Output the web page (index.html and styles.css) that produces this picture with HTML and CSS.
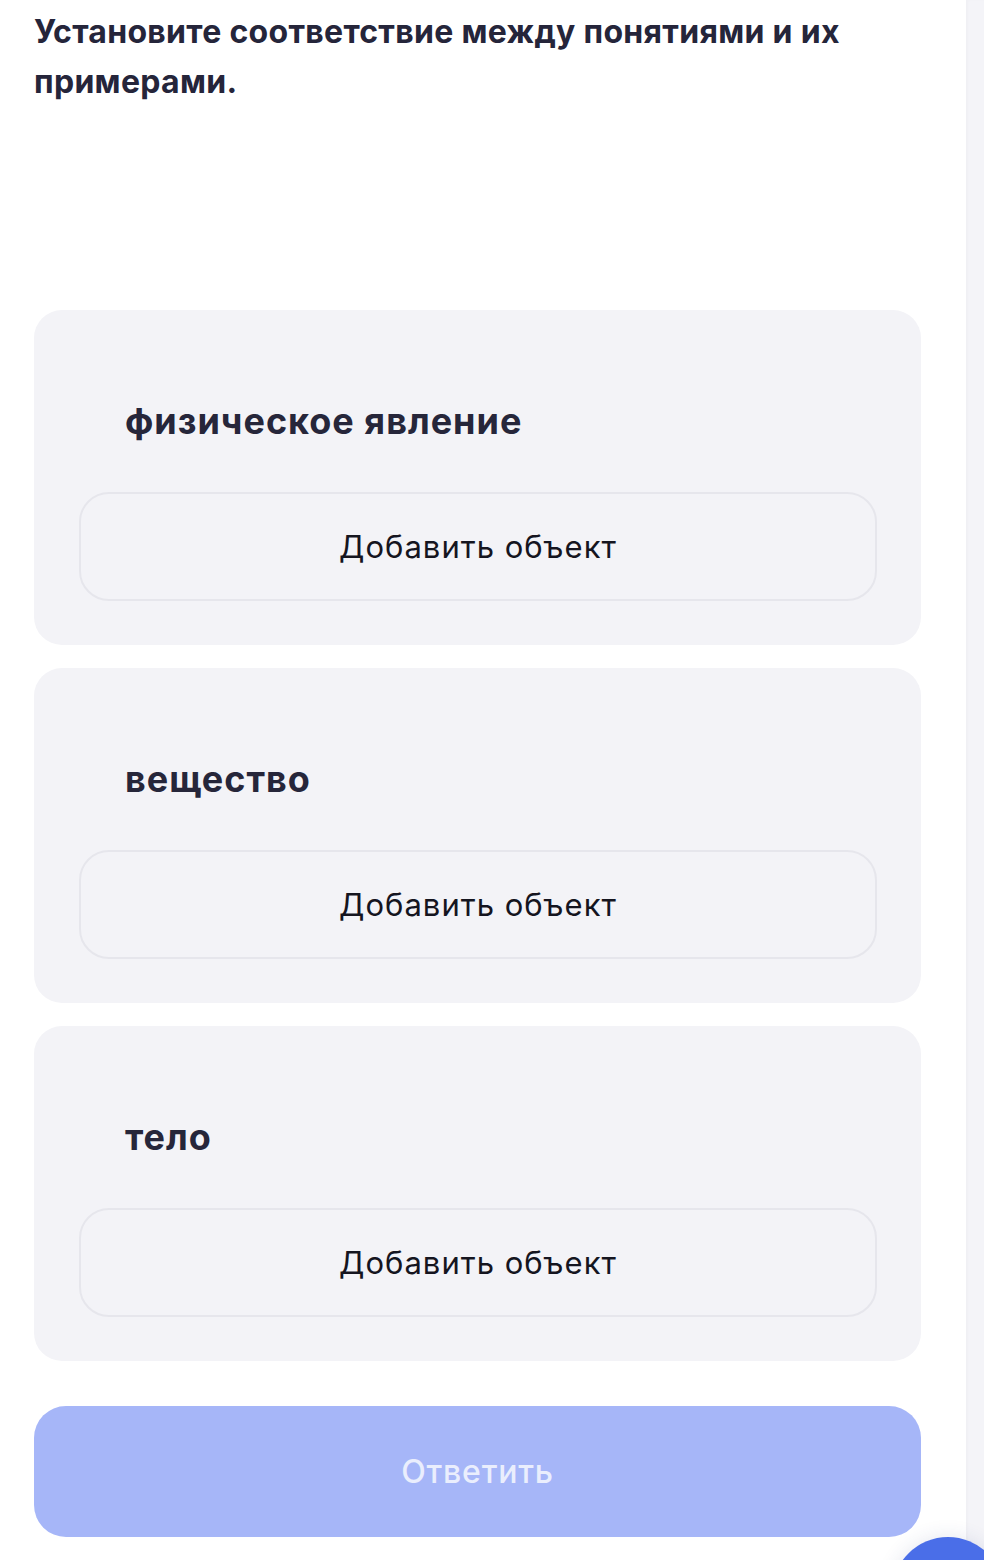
FILE: index.html
```html
<!DOCTYPE html>
<html lang="ru">
<head>
<meta charset="utf-8">
<title>Установите соответствие</title>
<link rel="stylesheet" href="styles.css">
</head>
<body>
<div class="page">
  <main class="main">
    <h1 class="title">Установите соответствие между понятиями и их примерами.</h1>
    <div class="cards">
      <section class="card">
        <h2 class="card-label">физическое явление</h2>
        <button class="drop">Добавить объект</button>
      </section>
      <section class="card">
        <h2 class="card-label">вещество</h2>
        <button class="drop">Добавить объект</button>
      </section>
      <section class="card">
        <h2 class="card-label">тело</h2>
        <button class="drop">Добавить объект</button>
      </section>
    </div>
    <button class="submit" disabled>Ответить</button>
  </main>
  <aside class="side"></aside>
</div>
<div class="fab-clip"><div class="fab"></div></div>
</body>
</html>
```
FILE: styles.css
```css
html, body {
  margin: 0;
  padding: 0;
  background: #ffffff;
  overflow: hidden;
}
body {
  width: 984px;
  height: 1560px;
  position: relative;
}
.page {
  display: flex;
  height: 1560px;
  overflow: hidden;
}
.main {
  width: 966px;
  box-sizing: border-box;
  padding: 7px 45px 0 34px;
}
.side {
  width: 18px;
  background: #f4f4f8;
  box-shadow: inset 2px 0 3px rgba(0,0,0,0.02);
}
.title {
  margin: 0;
  font-family: Inter, "Liberation Sans", sans-serif;
  font-weight: 700;
  font-size: 32px;
  letter-spacing: 0.3px;
  line-height: 50px;
  color: #25253a;
}
.cards {
  margin-top: 203px;
  display: flex;
  flex-direction: column;
  gap: 23px;
}
.card {
  background: #f3f3f7;
  border-radius: 28px;
  padding: 89px 44px 44px 45px;
  display: flex;
  flex-direction: column;
}
.card-label {
  margin: 0 0 49px 46px;
  font-family: Inter, "Liberation Sans", sans-serif;
  font-weight: 700;
  font-size: 36px;
  letter-spacing: 1px;
  line-height: 44px;
  color: #26263a;
}
.drop {
  height: 109px;
  box-sizing: border-box;
  border: 2px solid #e6e6ec;
  border-radius: 30px;
  background: #f3f3f7;
  font-family: Inter, "Liberation Sans", sans-serif;
  font-weight: 400;
  font-size: 31px;
  letter-spacing: 1px;
  color: #15151f;
  padding: 0;
  cursor: pointer;
}
.submit {
  margin-top: 45px;
  width: 100%;
  height: 131px;
  border: none;
  border-radius: 32px;
  background: #a6b6f8;
  color: #eaeefd;
  font-family: Inter, "Liberation Sans", sans-serif;
  font-size: 32px;
  font-weight: 500;
  letter-spacing: 0.8px;
  padding: 0;
}
.fab-clip {
  position: absolute;
  left: 872px;
  top: 1517px;
  width: 112px;
  height: 43px;
  overflow: hidden;
}
.fab {
  margin: 20px 0 0 20px;
  width: 112px;
  height: 112px;
  border-radius: 50%;
  background: #4a6ee8;
  box-shadow: 0 0 20px rgba(40,60,120,0.12);
}
```
